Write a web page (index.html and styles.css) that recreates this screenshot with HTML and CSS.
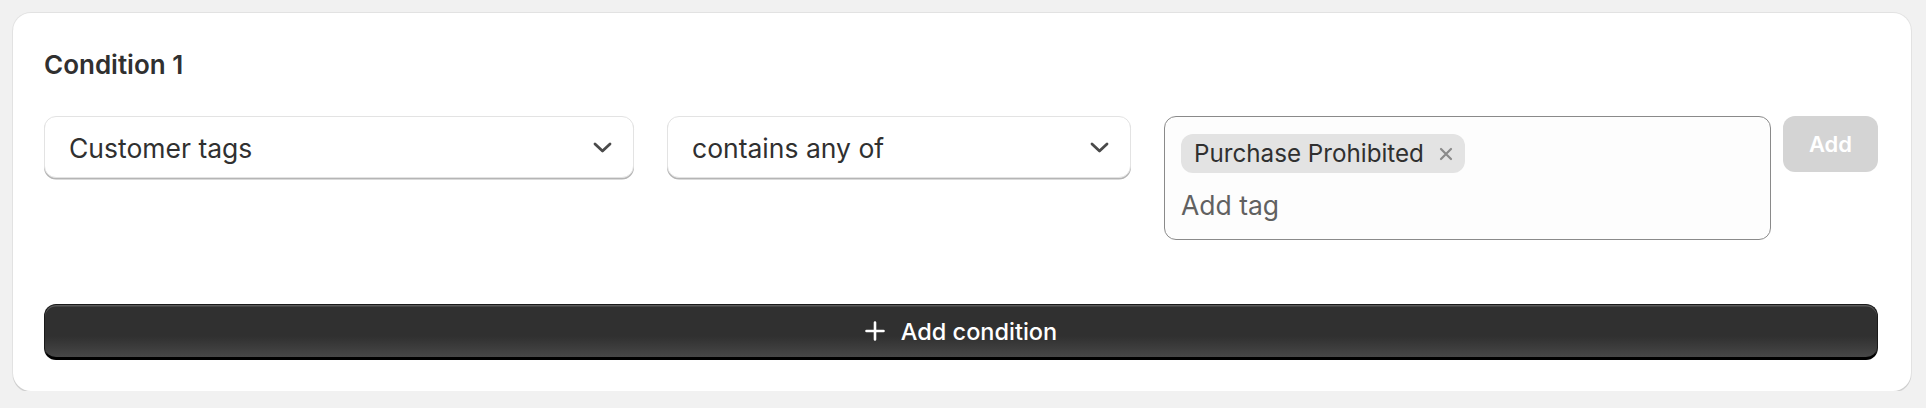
FILE: index.html
```html
<!DOCTYPE html>
<html>
<head>
    <meta charset="utf-8"/>
    <title>Condition</title>
    <link rel="stylesheet" href="styles.css">
</head>
<body>
<div class="card">
    <h2 class="title">Condition 1</h2>
    <div class="row">
        <div class="select">
            <span>Customer tags</span>
            <svg class="chevron" width="19" height="11" viewBox="0 0 19 11"><path d="M2 2 L9.5 9 L17 2" fill="none" stroke="#4a4a4a" stroke-width="2.8" stroke-linecap="round" stroke-linejoin="round"/></svg>
        </div>
        <div class="select">
            <span>contains any of</span>
            <svg class="chevron" width="19" height="11" viewBox="0 0 19 11"><path d="M2 2 L9.5 9 L17 2" fill="none" stroke="#4a4a4a" stroke-width="2.8" stroke-linecap="round" stroke-linejoin="round"/></svg>
        </div>
        <div class="tag-group">
            <div class="tag-input">
                <div class="chips">
                    <span class="chip">Purchase Prohibited
                        <svg width="14" height="14" viewBox="0 0 14 14"><path d="M2 2 L12 12 M12 2 L2 12" stroke="#8a8a8a" stroke-width="2.2" stroke-linecap="round"/></svg>
                    </span>
                </div>
                <div class="placeholder">Add tag</div>
            </div>
            <span class="add-btn">Add</span>
        </div>
    </div>
    <div class="add-condition">
        <svg width="20" height="20" viewBox="0 0 20 20"><path d="M10 1.5 V18.5 M1.5 10 H18.5" stroke="#fff" stroke-width="2.6" stroke-linecap="round"/></svg>
        <span>Add condition</span>
    </div>
</div>
</body>
</html>
```

FILE: styles.css
```css
* {
    margin: 0;
    padding: 0;
    box-sizing: border-box;
}
body {
    background: #f1f1f1;
    padding: 13px 15px 0 13px;
    font-family: Inter, "Noto Sans", sans-serif;
    color: #303030;
}
.card {
    background: #fff;
    border-radius: 18px;
    padding: 37px 33px 31px 31px;
    box-shadow: 0 0 0 1px rgba(0,0,0,.06), 0 2px 0 0 rgba(0,0,0,.09);
}
.title {
    font-size: 26px;
    font-weight: 600;
    line-height: 30px;
}
.row {
    display: grid;
    grid-template-columns: 590fr 464fr 714fr;
    gap: 33px;
    margin-top: 36px;
    align-items: start;
}
.select {
    display: flex;
    align-items: center;
    justify-content: space-between;
    height: 62px;
    padding: 0 21px 0 24px;
    border: 1.5px solid #e3e3e3;
    border-radius: 12px;
    box-shadow: 0 1.5px 0 0 #b5b5b5;
    font-size: 26.5px;
    background: #fff;
}
.select span {
    padding-top: 2px;
}
.tag-group {
    display: flex;
    gap: 12px;
    align-items: flex-start;
}
.tag-input {
    flex: 1;
    height: 124px;
    border: 1.5px solid #8a8a8a;
    border-radius: 12px;
    background: #fdfdfd;
    padding: 17px 16px 0;
}
.chips {
    display: flex;
}
.chip {
    display: flex;
    align-items: center;
    gap: 15px;
    height: 39px;
    padding: 0 12px 0 13px;
    border-radius: 12px;
    background: #e3e3e3;
    font-size: 24.2px;
}
.placeholder {
    margin-top: 16px;
    font-size: 26.5px;
    color: #616161;
}
.add-btn {
    width: 95px;
    height: 56px;
    border-radius: 12px;
    background: #d4d4d4;
    color: #fff;
    font-size: 22px;
    font-weight: 600;
    line-height: 56px;
    text-align: center;
}
.add-condition {
    display: flex;
    align-items: center;
    justify-content: center;
    gap: 16px;
    height: 56px;
    margin-top: 64px;
    border-radius: 12px;
    background: linear-gradient(180deg, #303030 60%, #474747 100%);
    border: 1.5px solid #1a1a1a;
    border-bottom: 3px solid #000;
    box-shadow: inset 0 1.5px 0 rgba(255,255,255,.2);
    color: #fff;
    font-size: 23.5px;
    font-weight: 500;
}
```
